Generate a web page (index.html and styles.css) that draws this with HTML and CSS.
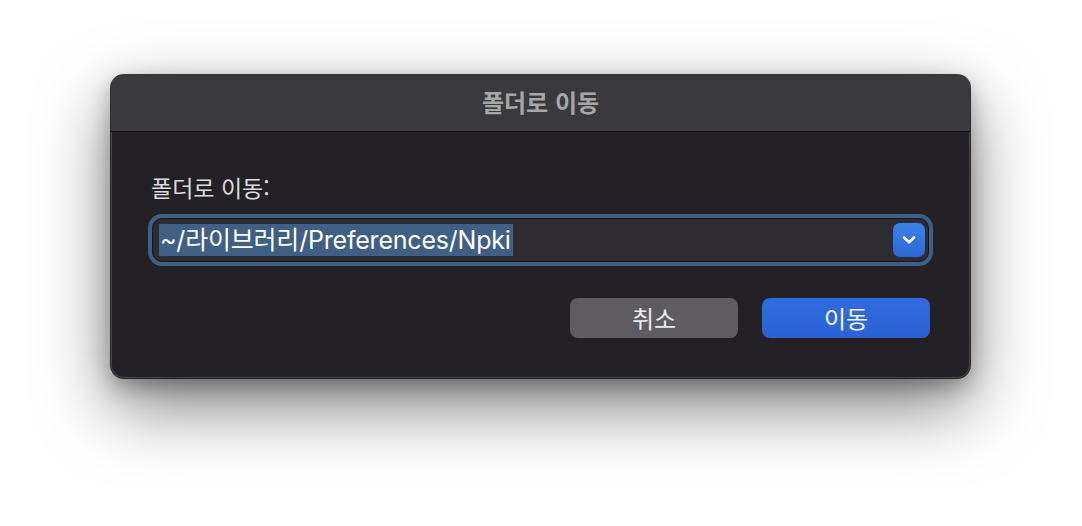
FILE: index.html
```html
<!DOCTYPE html>
<html lang="ko">
<head>
<meta charset="utf-8">
<title>폴더로 이동</title>
<link rel="stylesheet" href="styles.css">
</head>
<body>
<div class="dialog">
  <div class="titlebar"><span class="title">폴더로 이동</span></div>
  <div class="content">
    <div class="label">폴더로 이동:</div>
    <div class="combo">
      <div class="combo-inner">
        <span class="value">~/라이브러리/Preferences/Npki</span>
        <span class="drop">
          <svg width="16" height="12" viewBox="0 0 16 12"><path d="M3 3.5 L8 8.3 L13 3.5" fill="none" stroke="#fff" stroke-width="2.6" stroke-linecap="round" stroke-linejoin="round"/></svg>
        </span>
      </div>
    </div>
    <div class="actions">
      <button class="btn btn-cancel">취소</button>
      <button class="btn btn-primary">이동</button>
    </div>
  </div>
</div>
</body>
</html>
```
FILE: styles.css
```css
html, body {
  margin: 0;
  padding: 0;
  background: #ffffff;
}
body {
  width: 1082px;
  height: 526px;
  overflow: hidden;
  font-family: "Inter", "Noto Sans CJK KR", sans-serif;
}
.dialog {
  margin: 75px 0 0 111px;
  width: 859px;
  height: 303px;
  box-sizing: border-box;
  border-radius: 13px;
  background: #232125;
  overflow: hidden;
  box-shadow: 0 0 0 1px rgba(0,0,0,0.75), inset 0 0 0 1px rgba(255,255,255,0.16), 0 28px 70px rgba(0,0,0,0.5), 0 8px 22px rgba(0,0,0,0.3);
  display: flex;
  flex-direction: column;
}
.titlebar {
  height: 56px;
  flex: 0 0 56px;
  background: #3a393c;
  border-bottom: 1px solid #0f0f10;
  display: flex;
  align-items: center;
  justify-content: center;
}
.title {
  font-family: "Noto Sans CJK KR", sans-serif;
  font-weight: 700;
  font-size: 24px;
  color: #a7a6a9;
  line-height: 28px;
  margin-top: -3px;
}
.content {
  padding: 41px 37px 0 37px;
  display: flex;
  flex-direction: column;
}
.label {
  font-family: "Noto Sans CJK KR", sans-serif;
  font-size: 23px;
  line-height: 26px;
  color: #dcdcdd;
  margin-left: 3px;
  margin-top: 1px;
  margin-bottom: -1px;
}
.combo {
  margin-top: 15px;
  height: 52px;
  box-sizing: border-box;
  padding: 4px;
  border-radius: 14px;
  background: #3b6188;
}
.combo-inner {
  height: 44px;
  box-sizing: border-box;
  border: 1px solid #17161a;
  border-radius: 10px;
  background: #2e2c31;
  display: flex;
  align-items: center;
  justify-content: space-between;
  padding: 0 3px 0 6px;
}
.value {
  background: #3f5f85;
  color: #ffffff;
  font-size: 25px;
  line-height: 32px;
  height: 32px;
  padding: 0 2px 0 1px;
  letter-spacing: -0.2px;
}
.drop {
  width: 32px;
  height: 34px;
  border-radius: 7px;
  background: linear-gradient(#3b82ea, #2b68d6);
  display: flex;
  align-items: center;
  justify-content: center;
}
.actions {
  margin-top: 32px;
  display: flex;
  justify-content: flex-end;
  gap: 24px;
  padding-right: 3px;
}
.btn {
  width: 168px;
  height: 40px;
  border: none;
  border-radius: 8px;
  font-family: "Noto Sans CJK KR", sans-serif;
  font-size: 24px;
  padding: 0;
  line-height: 40px;
}
.btn-cancel {
  background: #5e5c60;
  color: #ebebec;
}
.btn-primary {
  background: linear-gradient(#2f6ce0, #2a62d4);
  color: #f4f6fb;
}
```
